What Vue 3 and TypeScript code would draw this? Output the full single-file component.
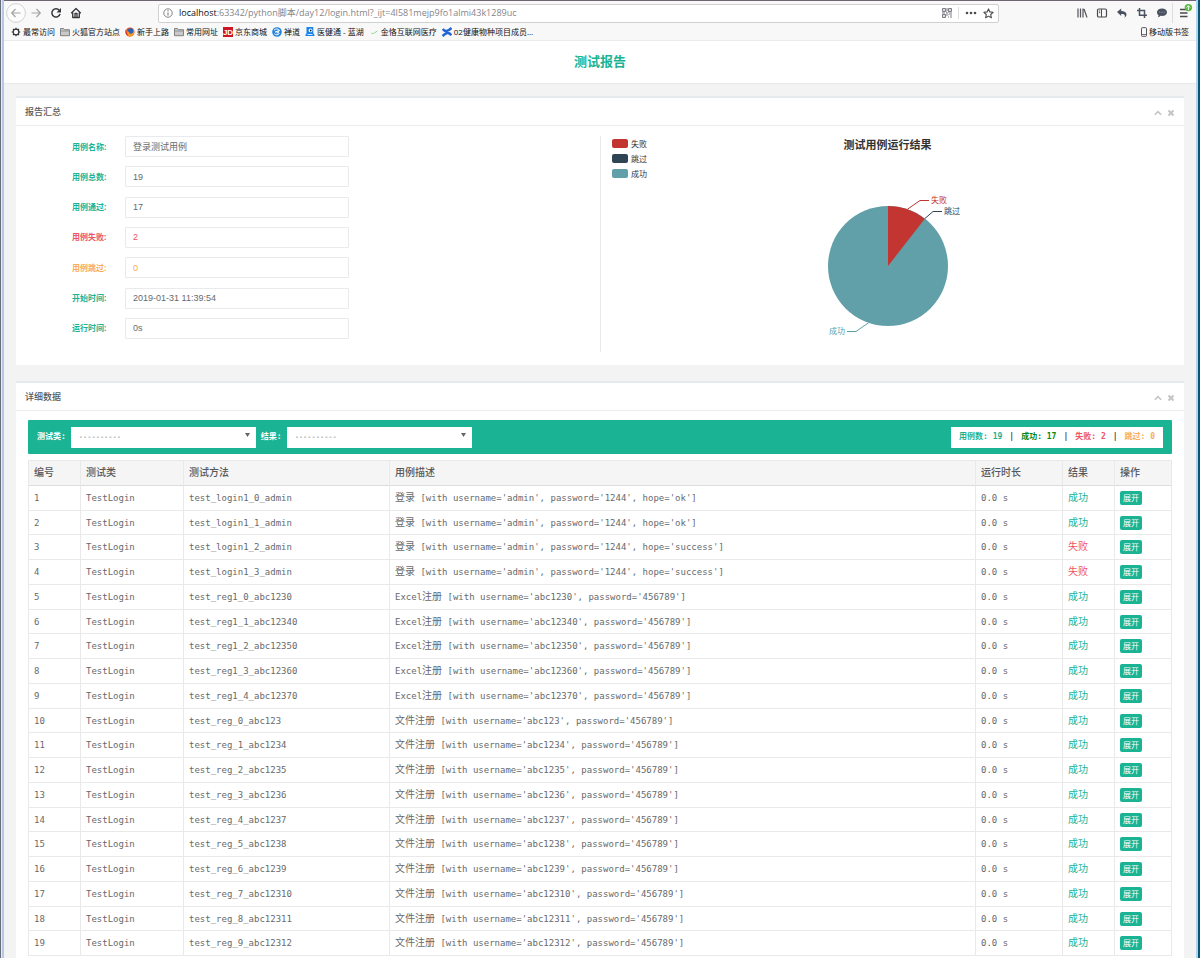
<script setup lang="ts">
import { ref } from 'vue'

interface Field {
  id: string
  label: string
  value: string
  tone: string
}

interface CaseRow {
  method: string
  title: string
  args: string
  ok: boolean
}

const address = '/python脚本/day12/login.html?_ijt=4l581mejp9fo1almi43k1289uc'

const bookmarks = [
  { icon: 'gear', text: '最常访问' },
  { icon: 'folder', text: '火狐官方站点' },
  { icon: 'firefox', text: '新手上路' },
  { icon: 'folder', text: '常用网址' },
  { icon: 'jd', text: '京东商城' },
  { icon: 'zen', text: '禅道' },
  { icon: 'lanhu', text: '医健通 - 蓝湖' },
  { icon: 'leaf', text: '金恪互联网医疗' },
  { icon: 'confluence', text: '02健康物种项目成员...' },
]

const fields = ref<Field[]>([
  { id: 'name', label: '用例名称:', value: '登录测试用例', tone: 'main' },
  { id: 'total', label: '用例总数:', value: '19', tone: 'main' },
  { id: 'passed', label: '用例通过:', value: '17', tone: 'main' },
  { id: 'failed', label: '用例失败:', value: '2', tone: 'danger' },
  { id: 'skipped', label: '用例跳过:', value: '0', tone: 'warning' },
  { id: 'start', label: '开始时间:', value: '2019-01-31 11:39:54', tone: 'main' },
  { id: 'duration', label: '运行时间:', value: '0s', tone: 'main' },
])

const legend = [
  { name: '失败', kind: 'fail' },
  { name: '跳过', kind: 'skip' },
  { name: '成功', kind: 'pass' },
]

const headers = ['编号', '测试类', '测试方法', '用例描述', '运行时长', '结果', '操作']

const rows: CaseRow[] = []
const hopes = ['ok', 'ok', 'success', 'success']
hopes.forEach((hope, i) => {
  rows.push({
    method: `test_login1_${i}_admin`,
    title: '登录',
    args: `[with username='admin', password='1244', hope='${hope}']`,
    ok: hope === 'ok',
  })
})
const excelUsers = ['abc1230', 'abc12340', 'abc12350', 'abc12360', 'abc12370']
excelUsers.forEach((user, i) => {
  rows.push({
    method: `test_reg1_${i}_${user}`,
    title: 'Excel注册',
    args: `[with username='${user}', password='456789']`,
    ok: true,
  })
})
for (let i = 0; i < 10; i++) {
  const user = `abc123${i === 0 ? '' : i + 3}`
  rows.push({
    method: `test_reg_${i}_${user}`,
    title: '文件注册',
    args: `[with username='${user}', password='456789']`,
    ok: true,
  })
}

const titleParts = (title: string) =>
  title.startsWith('Excel') ? { latin: 'Excel', han: title.slice(5) } : { latin: '', han: title }
</script>

<template>
  <div class="window">
    <header class="chrome">
      <div class="toolbar">
        <button class="tool back" aria-label="后退">
          <svg width="20" height="20" viewBox="0 0 20 20" fill="none" stroke="#a3a3a5" stroke-width="1.2"><circle cx="10" cy="10" r="9.4" stroke="#d2d2d4" stroke-width="1" fill="#fcfcfc" /><path d="M14.5 10H6M9.5 6L5.7 10l3.8 4" /></svg>
        </button>
        <button class="tool" aria-label="前进">
          <svg width="20" height="20" viewBox="0 0 20 20" fill="none" stroke="#a3a3a5" stroke-width="1.2"><path d="M5.500 10H14M10.500 6l3.800 4l-3.800 4" /></svg>
        </button>
        <button class="tool" aria-label="刷新">
          <svg width="20" height="20" viewBox="0 0 20 20" fill="none" stroke="#38383d" stroke-width="1.500"><path d="M13.300 7.500A4.100 4.100 0 1 0 14 10.800" /><path d="M15 5v4.500h-4.500z" fill="#38383d" stroke="none" /></svg>
        </button>
        <button class="tool" aria-label="主页">
          <svg width="20" height="20" viewBox="0 0 20 20" fill="none" stroke="#38383d" stroke-width="1.300" stroke-linejoin="round"><path d="M5.200 10.200L10 5.500l4.800 4.700M6.700 9.500v5h6.600v-5" /><path d="M9 14v-3.500h2V14" /></svg>
        </button>
        <div class="address">
          <svg class="info" width="10" height="10" viewBox="0 0 10 10" fill="none" stroke="#77777b"><circle cx="5" cy="5" r="4.200" stroke-width=".9" /><path d="M5 4.500v3M5 2.300v1.200" stroke-width="1.100" /></svg>
          <a class="url" href="#"><b>localhost</b>:63342{{ address }}</a>
          <svg width="10" height="10" viewBox="0 0 10 10" fill="none" stroke="#7c7c84" stroke-width="1"><path d="M.5 .5h3v3h-3zM6.500 .5h3v3h-3zM.5 6.500h3v3h-3z" /><path d="M5 0v3M4 5h2M7 5h3M0 5h3M5 6v2M6 9h1M8 7h2M8 9h2M7 6v1M2 1.500v1M8 1.500v1M2 7.500v1M4 4h1M6 4h1" /></svg>
          <i class="split"></i>
          <svg width="12" height="10" viewBox="0 0 12 10" fill="#4a4a4f"><circle cx="2" cy="5" r="1.300" /><circle cx="6" cy="5" r="1.300" /><circle cx="10" cy="5" r="1.300" /></svg>
          <svg class="star" width="11" height="11" viewBox="0 0 11 11" fill="none" stroke="#4a4a4f" stroke-width="1.100" stroke-linejoin="round"><path d="M5.500 .9l1.400 3 3.200.4-2.400 2.200.7 3.300-2.900-1.700-2.900 1.700.7-3.300L.9 4.300l3.200-.4z" /></svg>
        </div>
        <button class="tool" aria-label="书库">
          <svg width="20" height="20" viewBox="0 0 20 20" fill="none" stroke="#55555a" stroke-width="1.200"><path d="M6 5.500v9M8.500 5.500v9M11 5.500v9M12 6l3 8.500" /></svg>
        </button>
        <button class="tool" aria-label="侧栏">
          <svg width="20" height="20" viewBox="0 0 20 20" fill="none" stroke="#4a4a50" stroke-width="1.200"><rect x="5.500" y="6" width="9" height="8" rx="1.300" /><path d="M9.500 6v8M7 8h1.200M7 9.700h1.200" stroke-width="1" /></svg>
        </button>
        <button class="tool" aria-label="撤销">
          <svg width="20" height="20" viewBox="0 0 20 20" fill="#4a5260"><path d="M5 9l4.200-3.500V8c3.200 0 5.300 1.300 5.300 3.600 0 1.300-.7 2.400-2.300 3.300.6-1 .9-1.700.5-2.600-.4-.9-1.600-1.300-3.500-1.200v2z" /></svg>
        </button>
        <button class="tool" aria-label="裁剪">
          <svg width="20" height="20" viewBox="0 0 20 20" fill="none" stroke="#4a5260" stroke-width="1.500"><path d="M7.500 5v7.300H15M5 7.500h7.500V15" /></svg>
        </button>
        <button class="tool" aria-label="消息">
          <svg width="20" height="20" viewBox="0 0 20 20"><path d="M10 5.500c2.900 0 5 1.600 5 3.700s-2.100 3.700-5 3.700c-.5 0-1 0-1.400-.1-.7.8-1.600 1.300-2.800 1.500.5-.6.8-1.300.8-2.100C5.600 11.500 5 10.400 5 9.200c0-2.100 2.100-3.700 5-3.700z" fill="#4a5260" /><path d="M7.300 9.200h1M9.500 9.200h1M11.700 9.200h1" stroke="#9aa0aa" /></svg>
        </button>
        <i class="split tall"></i>
        <button class="tool menu" aria-label="菜单">
          <svg width="20" height="20" viewBox="0 0 20 20"><path d="M6 6.500h7M6 10h7.500M6 13.500h7.500" stroke="#4a4a4f" stroke-width="1.300" /><circle cx="14.400" cy="4.600" r="3.700" fill="#5dbb3c" /><path d="M14.400 7V3M12.600 4.500l1.800-1.800 1.800 1.800" fill="none" stroke="#fff" stroke-width=".9" /></svg>
        </button>
      </div>
      <nav class="bookmarks">
        <a v-for="mark in bookmarks" :key="mark.text" href="#">
          <svg width="10" height="10" viewBox="0 0 10 10">
            <g v-if="mark.icon === 'gear'" fill="none" stroke="#333"><circle cx="5" cy="5" r="2.800" stroke-width="1.200" /><path d="M5 .7v1.500M5 7.800v1.500M.7 5h1.500M7.800 5h1.500M2 2l1 1M7 7l1 1M2 8l1-1M7 3l1-1" stroke-width="1.200" /></g>
            <g v-else-if="mark.icon === 'folder'"><path d="M.5 1.500h3l1 1.200h5v6H.5z" fill="#c9c9c9" stroke="#777" stroke-width=".9" /><path d="M.5 4h9" stroke="#888" stroke-width=".8" /></g>
            <g v-else-if="mark.icon === 'firefox'"><circle cx="5" cy="5" r="4.500" fill="#e8502a" /><circle cx="5.600" cy="4.200" r="2.900" fill="#2b62b8" /><path d="M.7 3C2 3.500 2 4.600 3.500 4.700c1 0 1.300.6.6 1.200 1.700 1.600 4 .6 4.400-1.600L8.300 2c2.300 2.700.9 7.500-3.300 7.500C1.700 9.500-.2 6.300.7 3z" fill="#f2992b" /><path d="M.8 2.500C.2 5 .6 7.800 3.500 9.200 2.300 7.500 1.800 5 .8 2.500z" fill="#d6282c" /></g>
            <g v-else-if="mark.icon === 'jd'"><rect width="10" height="10" fill="#cf1423" /><text x="5" y="8" text-anchor="middle" class="jd">JD</text></g>
            <g v-else-if="mark.icon === 'zen'"><circle cx="5" cy="5" r="4.800" fill="#2384dc" /><path d="M2 3.200c1.500-1.700 4.300-1.600 5.600.2L3.200 5c1.500-.4 3.400 0 4 1.600-1.300 1.700-3.700 1.500-4.900.2M7.400 3.500L5 6.600" fill="none" stroke="#fff" stroke-width="1" /></g>
            <g v-else-if="mark.icon === 'lanhu'"><path d="M1.500 0h6.800v5.500c0 1 .5 1.500 1.200 2.200V9H.5V7.700C1.200 7 1.500 6.500 1.500 5.500z" fill="#1683ea" /><circle cx="5.500" cy="3.400" r="1.900" fill="#fff" /><circle cx="5.700" cy="3.500" r=".9" fill="#123" /><path d="M2.500 7.500h5" stroke="#fff" stroke-width=".8" /></g>
            <path v-else-if="mark.icon === 'leaf'" d="M2 5.700c1 1 1.800 1 2.700.6L8.500 4" fill="none" stroke="#8fdc8b" stroke-width="1" />
            <g v-else fill="none" stroke="#2465d3" stroke-width="2.600"><path d="M.8 2C3 5.300 6 4.500 9.500 1M.5 9C4 5.500 7 4.800 9.300 8.200" /></g>
          </svg>
          <span>{{ mark.text }}</span>
        </a>
        <a class="mobile" href="#">
          <svg width="6" height="10" viewBox="0 0 6 10" fill="none" stroke="#55555a"><rect x=".5" y=".7" width="5" height="8.600" rx=".7" /><path d="M1 7.500h4" stroke-width=".8" /></svg>
          <span>移动版书签</span>
        </a>
      </nav>
    </header>

    <main class="page">
      <h1>测试报告</h1>

      <section class="panel">
        <header class="panel-head">
          <h2>报告汇总</h2>
          <div class="panel-tools">
            <button aria-label="收起"><svg width="8" height="8" viewBox="0 0 8 8" fill="none" stroke="#c4c4c4" stroke-width="1.500"><path d="M.8 5.800L4 2.600l3.200 3.200" /></svg></button>
            <button aria-label="关闭"><svg width="8" height="8" viewBox="0 0 8 8" fill="none" stroke="#c4c4c4" stroke-width="2"><path d="M1.500 1.500l5 5M6.500 1.500l-5 5" /></svg></button>
          </div>
        </header>
        <div class="summary">
          <form class="fields" @submit.prevent>
            <div v-for="field in fields" :key="field.id" class="field" :class="field.tone">
              <label :for="field.id">{{ field.label }}</label>
              <input :id="field.id" v-model="field.value" type="text" readonly />
            </div>
          </form>
          <div class="chart">
            <ul class="legend">
              <li v-for="item in legend" :key="item.kind"><i :class="item.kind"></i>{{ item.name }}</li>
            </ul>
            <figure>
              <figcaption>测试用例运行结果</figcaption>
              <svg width="140" height="150" viewBox="-3 0 140 150">
                <circle cx="67" cy="80" r="60" class="pass" />
                <path d="M67 80V20A60 60 0 0 1 103.850 32.650Z" class="fail" />
                <g fill="none">
                  <path d="M86.500 23.200L99 14.500h9" stroke="#c23531" />
                  <path d="M103.800 32.600L112 25.500h9" stroke="#2f4554" />
                  <path d="M47.500 136.800L35 145.500h-9" stroke="#61a0a8" />
                </g>
                <text x="110" y="17" class="fail">失败</text>
                <text x="123" y="28" class="skip">跳过</text>
                <text x="24" y="148" text-anchor="end" class="pass">成功</text>
              </svg>
            </figure>
          </div>
        </div>
      </section>

      <section class="panel">
        <header class="panel-head">
          <h2>详细数据</h2>
          <div class="panel-tools">
            <button aria-label="收起"><svg width="8" height="8" viewBox="0 0 8 8" fill="none" stroke="#c4c4c4" stroke-width="1.500"><path d="M.8 5.800L4 2.600l3.200 3.200" /></svg></button>
            <button aria-label="关闭"><svg width="8" height="8" viewBox="0 0 8 8" fill="none" stroke="#c4c4c4" stroke-width="2"><path d="M1.500 1.500l5 5M6.500 1.500l-5 5" /></svg></button>
          </div>
        </header>
        <div class="details">
          <div class="filter">
            <label for="class-filter">测试类:</label>
            <div class="pick">
              <select id="class-filter"><option>----------</option><option>TestLogin</option></select>
              <svg width="5" height="4" viewBox="0 0 5 4"><path d="M0 0h5L2.500 4z" fill="#666" /></svg>
            </div>
            <label for="result-filter">结果:</label>
            <div class="pick">
              <select id="result-filter"><option>----------</option><option>成功</option><option>失败</option></select>
              <svg width="5" height="4" viewBox="0 0 5 4"><path d="M0 0h5L2.500 4z" fill="#666" /></svg>
            </div>
            <div class="stats">
              <span class="main">用例数: 19</span><i>|</i>
              <span class="good">成功: 17</span><i>|</i>
              <span class="danger">失败: 2</span><i>|</i>
              <span class="warning">跳过: 0</span>
            </div>
          </div>
          <table>
            <colgroup>
              <col class="c-no" /><col class="c-class" /><col class="c-method" /><col /><col class="c-time" /><col class="c-result" /><col class="c-action" />
            </colgroup>
            <thead>
              <tr><th v-for="name in headers" :key="name" scope="col">{{ name }}</th></tr>
            </thead>
            <tbody>
              <tr v-for="(row, index) in rows" :key="row.method">
                <td>{{ index + 1 }}</td>
                <td>TestLogin</td>
                <td>{{ row.method }}</td>
                <td>{{ titleParts(row.title).latin }}<span class="han">{{ titleParts(row.title).han }}</span> {{ row.args }}</td>
                <td>0.0 s</td>
                <td><span class="han" :class="row.ok ? 'main' : 'danger'">{{ row.ok ? '成功' : '失败' }}</span></td>
                <td><button class="expand">展开</button></td>
              </tr>
            </tbody>
          </table>
        </div>
      </section>
    </main>
  </div>
</template>

<style>
body {
  margin: 0;
  background: #f3f3f4;
}
</style>

<style scoped>
* {
  box-sizing: border-box;
}
.window {
  min-height: 100vh;
  display: flow-root;
  padding: 0 4px;
  background: linear-gradient(90deg, #686d78 0 1px, #e4e9f2 1px 2px, #b5c9e6 2px 4px, transparent 4px calc(100% - 4px), #aed4f2 calc(100% - 4px) calc(100% - 2px), #0a5670 calc(100% - 2px));
  font-family: "Open Sans", "Noto Sans CJK SC", sans-serif;
  color: #676a6c;
}
button {
  display: flex;
  align-items: center;
  justify-content: center;
  margin: 0;
  padding: 0;
  border: 0;
  background: none;
}
a {
  color: inherit;
  text-decoration: none;
}
svg {
  display: block;
  flex: none;
}
.chrome {
  height: 41px;
  border-top: 1px solid #6d6672;
  border-bottom: 1px solid #ebebec;
  background: #f8f8f9;
}
.toolbar {
  height: 24px;
  display: flex;
  align-items: center;
  padding: 0 2px;
}
.tool {
  width: 20px;
  height: 20px;
}
.menu {
  margin-left: 1px;
}
.address {
  flex: 1;
  height: 19px;
  margin: 0 73px 0 72px;
  padding: 0 4px;
  display: flex;
  align-items: center;
  gap: 6px;
  border: 1px solid #d0d0d1;
  border-radius: 2px;
  background: #fff;
}
.url {
  flex: 1;
  min-width: 0;
  overflow: hidden;
  white-space: nowrap;
  font-size: 9px;
  line-height: 14px;
  color: #85858a;
}
.url b {
  font-weight: 400;
  color: #111;
}
.split {
  width: 1px;
  height: 12px;
  background: #ddd;
}
.split.tall {
  height: 20px;
}
.bookmarks {
  height: 14px;
  display: flex;
  align-items: center;
  gap: 5px;
  padding: 0 7px;
  font-size: 8px;
  line-height: 12px;
  color: #111;
}
.bookmarks a {
  display: flex;
  align-items: center;
  gap: 2px;
  white-space: nowrap;
}
.bookmarks .mobile {
  margin-left: auto;
}
.jd {
  fill: #fff;
  font: 700 8px "Liberation Sans", sans-serif;
}
h1 {
  margin: 0;
  height: 43px;
  border-bottom: 1px solid #e7eaec;
  background: #fff;
  font-size: 13px;
  line-height: 41px;
  font-weight: 700;
  text-align: center;
  color: #1ab394;
}
.page {
  background: #f3f3f4;
}
.panel {
  margin: 12px 12px 16px;
  border-top: 2px solid #e7eaec;
  background: #fff;
}
.panel + .panel {
  margin-bottom: 0;
}
.panel-head {
  height: 28px;
  padding: 0 9px;
  display: flex;
  align-items: center;
  justify-content: space-between;
  border-bottom: 1px solid #ebecee;
}
h2 {
  margin: 0;
  font-size: 9px;
  line-height: 14px;
  font-weight: 500;
  color: #55585a;
}
.panel-tools {
  display: flex;
  gap: 5px;
  padding-top: 2px;
}
.summary {
  display: grid;
  grid-template-columns: 1fr 1fr;
  padding: 10px 12px 13px;
}
.fields {
  display: flex;
  flex-direction: column;
  justify-content: space-between;
  padding: 0 0 13px 44px;
}
.field {
  display: grid;
  grid-template-columns: 53px 224px;
  align-items: center;
}
.field label {
  font-size: 8px;
  line-height: 12px;
  font-weight: 700;
}
.field input {
  height: 21px;
  padding: 0 7px;
  border: 1px solid #e9eaeb;
  border-radius: 1px;
  outline: none;
  background: #fff;
  font: 9px "Liberation Sans", "Noto Sans CJK SC", sans-serif;
  color: #676a6c;
}
.main {
  color: #1ab394;
}
.good {
  color: #0a860a;
}
.danger,
.field.danger input {
  color: #ed5565;
}
.warning,
.field.warning input {
  color: #f8ac59;
}
.chart {
  display: grid;
  border-left: 1px solid #e7eaec;
}
.legend {
  grid-area: 1 / 1;
  justify-self: start;
  margin: 0;
  padding: 0 0 0 11px;
  list-style: none;
  font-size: 8px;
  line-height: 15px;
  color: #333;
}
.legend li {
  display: flex;
  align-items: center;
  gap: 3px;
}
.legend i {
  width: 16px;
  height: 9px;
  border-radius: 2px;
}
i.fail {
  background: #c23531;
}
i.skip {
  background: #2f4554;
}
i.pass {
  background: #61a0a8;
}
figure {
  grid-area: 1 / 1;
  height: 216px;
  margin: 0;
  padding-left: 2px;
  display: flex;
  flex-direction: column;
  align-items: center;
}
figcaption {
  height: 50px;
  font-size: 11px;
  line-height: 17px;
  font-weight: 700;
  color: #333;
}
figure svg {
  overflow: visible;
  font-size: 8px;
}
svg .fail {
  fill: #c23531;
}
svg .skip {
  fill: #2f4554;
}
svg .pass {
  fill: #61a0a8;
}
.details {
  padding: 9px 12px 3px;
}
.filter {
  height: 34px;
  margin-bottom: 6px;
  padding: 0 9px;
  display: flex;
  align-items: center;
  gap: 5px;
  border-radius: 1px;
  background: #1ab394;
}
.filter label {
  font: 700 8px/12px "DejaVu Sans Mono", "Noto Sans CJK SC", monospace;
  color: #fff;
}
.pick {
  position: relative;
}
.pick select {
  display: block;
  width: 185px;
  height: 21px;
  padding: 0 8px;
  border: 0;
  border-radius: 0;
  appearance: none;
  background: #fff;
  font: 7px "DejaVu Sans Mono", monospace;
  color: #55585a;
}
.pick svg {
  position: absolute;
  top: 6px;
  right: 6px;
  pointer-events: none;
}
.stats {
  height: 21px;
  margin-left: auto;
  padding: 0 8px;
  display: flex;
  align-items: center;
  gap: 7px;
  background: #fff;
  font: 700 8px/12px "DejaVu Sans Mono", "Noto Sans CJK SC", monospace;
  white-space: nowrap;
}
.stats i {
  font-style: normal;
  color: #444;
}
table {
  width: 100%;
  table-layout: fixed;
  border-collapse: separate;
  border-spacing: 0;
  border-left: 1px solid #e9e9e9;
  font: 9px/12px "DejaVu Sans Mono", "Noto Sans CJK SC", monospace;
}
.c-no {
  width: 52px;
}
.c-class {
  width: 103px;
}
.c-method {
  width: 206px;
}
.c-time {
  width: 87px;
}
.c-result {
  width: 52px;
}
.c-action {
  width: 57px;
}
th,
td {
  height: 25px;
  padding: 0 5px;
  border-right: 1px solid #e9e9e9;
  border-bottom: 1px solid #e9e9e9;
  text-align: left;
  vertical-align: middle;
  white-space: nowrap;
}
th {
  height: 26px;
  border-top: 1px solid #e9e9e9;
  border-bottom-color: #ddd;
  background: #f5f5f6;
  font-size: 10px;
  font-weight: 500;
  color: #55585a;
}
tbody tr:nth-child(4n + 2) td {
  height: 24px;
}
.han {
  font-size: 10px;
}
.expand {
  width: 22px;
  height: 14px;
  border-radius: 2px;
  background: #1ab394;
  font: 8px/12px "Open Sans", "Noto Sans CJK SC", sans-serif;
  color: #fff;
}
</style>
